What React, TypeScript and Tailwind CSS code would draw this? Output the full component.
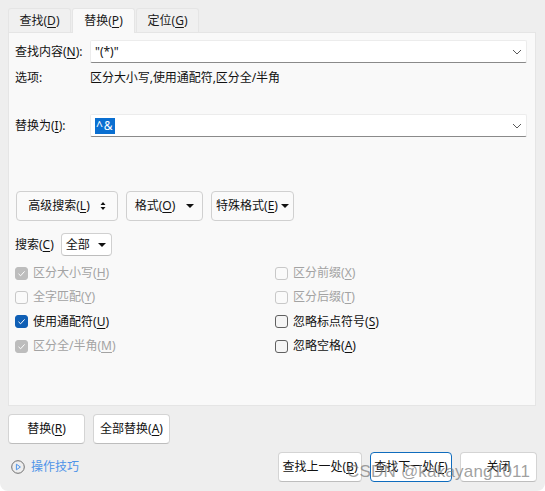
import React from "react";

const font = { fontFamily: '"Noto Sans","Noto Sans CJK SC",sans-serif' };

function U({ c }: { c: string }) {
  return <span className="underline underline-offset-2 decoration-1">{c}</span>;
}

function Chevron() {
  return (
    <svg width="10" height="6" viewBox="0 0 10 6" className="shrink-0">
      <path d="M1 1 L5 5 L9 1" fill="none" stroke="#5a5a5a" strokeWidth="1" />
    </svg>
  );
}

function Caret() {
  return (
    <svg width="8" height="4" viewBox="0 0 8 4" className="shrink-0">
      <path d="M0 0 H8 L4 4 Z" fill="#111" />
    </svg>
  );
}

function Tab({ active, w, children }: { active?: boolean; w: string; children: React.ReactNode }) {
  return (
    <div
      className={
        active
          ? `${w} h-[25px] -mb-px z-10 flex items-center justify-center border border-b-0 border-[#e5e5e5] bg-[#f9f9f9] rounded-t-[3px] text-[#1a1a1a]`
          : `${w} h-[24px] flex items-center justify-center border border-b-0 border-[#e5e5e5] bg-[#f0f0f0] rounded-t-[3px] text-[#1a1a1a]`
      }
    >
      <span>{children}</span>
    </div>
  );
}

function Combo({ children }: { children?: React.ReactNode }) {
  return (
    <div className="ml-auto w-[437px] h-[23px] flex items-center justify-between pl-[4px] pr-[4px] bg-white border border-[#ececec] border-b-[#8a8a8a] rounded-[2px]">
      <div className="flex items-center text-[#111]">{children}</div>
      <Chevron />
    </div>
  );
}

function Btn({
  w,
  children,
  primary,
  className = "",
}: {
  w: string;
  children: React.ReactNode;
  primary?: boolean;
  className?: string;
}) {
  return (
    <div
      className={`${w} h-[30px] flex items-center justify-center shrink-0 rounded-[4px] border bg-white text-[#111] whitespace-nowrap ${
        primary ? "border-[#0f6cbd]" : "border-[#d4d4d4] border-b-[#bdbdbd]"
      } ${className}`}
    >
      {children}
    </div>
  );
}

function Check({ state, label, k }: { state: "on" | "off" | "dis-on" | "dis-off"; label: string; k: string }) {
  const disabled = state === "dis-on" || state === "dis-off";
  const box =
    state === "on"
      ? "bg-[#0f5fb5] border-[#0f5fb5]"
      : state === "off"
      ? "bg-[#f5f5f5] border-[#606060]"
      : state === "dis-on"
      ? "bg-[#bdbdbd] border-[#bdbdbd]"
      : "bg-[#fafafa] border-[#c8c8c8]";
  return (
    <div className={`h-[24.33px] flex items-center gap-[5px] ${disabled ? "text-[#a3a3a3]" : "text-[#111]"}`}>
      <div className={`w-[13px] h-[13px] rounded-[3px] border flex items-center justify-center ${box}`}>
        {(state === "on" || state === "dis-on") && (
          <svg width="9" height="9" viewBox="0 0 9 9">
            <path d="M1.5 4.8 L3.6 6.8 L7.6 2.4" fill="none" stroke="#fff" strokeWidth="1" />
          </svg>
        )}
      </div>
      <span>
        {label}(<U c={k} />)
      </span>
    </div>
  );
}

export default function App() {
  return (
    <div className="w-[545px] h-[491px] bg-white">
      <div
        className="relative w-[545px] h-[491px] overflow-hidden flex flex-col bg-[#eeeeee] rounded-b-[8px] pt-[7px] px-[8px] text-[12px] leading-[16px] text-[#111]"
        style={font}
      >
        <div className="flex items-end gap-px h-[25px]">
          <Tab w="w-[63px]">
            查找(<U c="D" />)
          </Tab>
          <Tab active w="w-[63px]">
            替换(<U c="P" />)
          </Tab>
          <Tab w="w-[63px]">
            定位(<U c="G" />)
          </Tab>
        </div>

        <div className="w-[528px] h-[374px] shrink-0 border border-[#e5e5e5] bg-[#f9f9f9] pl-[6px] pr-[8px] pt-[7px] flex flex-col">
          <div className="flex items-center h-[23px]">
            <span>
              查找内容(<U c="N" />):
            </span>
            <Combo>"(*)"</Combo>
          </div>
          <div className="flex items-center mt-[7px] h-[16px]">
            <span className="w-[75px]">选项:</span>
            <span className="tracking-[-0.05px]">区分大小写,使用通配符,区分全/半角</span>
          </div>
          <div className="flex items-center mt-[28px] h-[23px]">
            <span>
              替换为(<U c="I" />):
            </span>
            <Combo>
              <span className="bg-[#0a6fd1] text-white px-[1px] tracking-[1px]">^&amp;</span>
            </Combo>
          </div>

          <div className="flex items-center gap-[8px] mt-[54px] pl-px">
            <Btn w="w-[102px]" className="gap-[10px] !border-[#d0d0d0] !bg-[#fafafa]">
              <span>
                高级搜索(<U c="L" />)
              </span>
              <svg width="6" height="8" viewBox="0 0 6 8">
                <path d="M3 0 L5.5 3 H0.5 Z M0.5 5 H5.5 L3 8 Z" fill="#111" />
              </svg>
            </Btn>
            <Btn w="w-[77px]" className="gap-[11px] !border-[#d0d0d0] !bg-[#fafafa]">
              <span>
                格式(<U c="O" />)
              </span>
              <Caret />
            </Btn>
            <Btn w="w-[83px]" className="gap-[3px] !border-[#d0d0d0] !bg-[#fafafa]">
              <span>
                特殊格式(<U c="E" />)
              </span>
              <Caret />
            </Btn>
          </div>

          <div className="flex items-center gap-[7px] mt-[12px] h-[23px]">
            <span>
              搜索(<U c="C" />)
            </span>
            <div className="w-[51px] h-[23px] flex items-center justify-between pl-[4px] pr-[5px] rounded-[4px] bg-white border border-[#d0d0d0] border-b-[#bdbdbd]">
              <span>全部</span>
              <Caret />
            </div>
          </div>

          <div className="grid grid-cols-[260px_1fr] mt-[5px]">
            <Check state="dis-on" label="区分大小写" k="H" />
            <Check state="dis-off" label="区分前缀" k="X" />
            <Check state="dis-off" label="全字匹配" k="Y" />
            <Check state="dis-off" label="区分后缀" k="T" />
            <Check state="on" label="使用通配符" k="U" />
            <Check state="off" label="忽略标点符号" k="S" />
            <Check state="dis-on" label="区分全/半角" k="M" />
            <Check state="off" label="忽略空格" k="A" />
          </div>
        </div>

        <div className="flex gap-[8px] mt-[8px]">
          <Btn w="w-[77px]">
            替换(<U c="R" />)
          </Btn>
          <Btn w="w-[77px]">
            全部替换(<U c="A" />)
          </Btn>
        </div>

        <div className="flex items-center justify-between mt-[8px] w-[529px]">
          <div className="flex items-center gap-[6px] pl-[3px]">
            <svg width="14" height="14" viewBox="0 0 14 14">
              <circle cx="7" cy="7" r="6.3" fill="none" stroke="#707070" strokeWidth="1" />
              <path d="M5.4 4.2 L9.4 7 L5.4 9.8 Z" fill="none" stroke="#4f94e8" strokeWidth="1" />
            </svg>
            <span className="text-[#4f94e8]">操作技巧</span>
          </div>
          <div className="flex gap-[8px]">
            <Btn w="w-[84px]">
              查找上一处(<U c="B" />)
            </Btn>
            <Btn w="w-[82px]" primary>
              查找下一处(<U c="F" />)
            </Btn>
            <Btn w="w-[77px]">关闭</Btn>
          </div>
        </div>

        <div
          className="absolute z-20 left-[347px] top-[461px] text-[17px] leading-[22px] tracking-[0.2px] text-[#777777]/70 whitespace-nowrap"
          style={{ fontFamily: '"Liberation Sans",sans-serif' }}
        >
          CSDN @kakayang1011
        </div>
      </div>
    </div>
  );
}
